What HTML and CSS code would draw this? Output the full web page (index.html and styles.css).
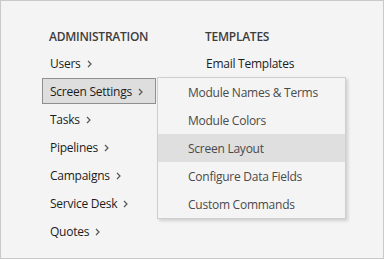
FILE: index.html
```html
<!DOCTYPE html>
<html lang="en">
<head>
  <meta charset="UTF-8" />
  <title>Settings Menu</title>
  <link rel="stylesheet" href="styles.css">
</head>
<body>
  <!-- ======= SETTINGS PANEL ======= -->
  <div class="panel">
    <div class="column admin">
      <h2 class="heading">ADMINISTRATION</h2>
      <ul class="menu">
        <li class="item">Users <svg class="chev" viewBox="0 0 5 8"><path d="M1 1l3 3-3 3"/></svg></li>
        <li class="item active">Screen Settings <svg class="chev" viewBox="0 0 5 8"><path d="M1 1l3 3-3 3"/></svg>
          <ul class="submenu">
            <li>Module Names &amp; Terms</li>
            <li>Module Colors</li>
            <li class="hover">Screen Layout</li>
            <li>Configure Data Fields</li>
            <li>Custom Commands</li>
          </ul>
        </li>
        <li class="item">Tasks <svg class="chev" viewBox="0 0 5 8"><path d="M1 1l3 3-3 3"/></svg></li>
        <li class="item">Pipelines <svg class="chev" viewBox="0 0 5 8"><path d="M1 1l3 3-3 3"/></svg></li>
        <li class="item">Campaigns <svg class="chev" viewBox="0 0 5 8"><path d="M1 1l3 3-3 3"/></svg></li>
        <li class="item">Service Desk <svg class="chev" viewBox="0 0 5 8"><path d="M1 1l3 3-3 3"/></svg></li>
        <li class="item">Quotes <svg class="chev" viewBox="0 0 5 8"><path d="M1 1l3 3-3 3"/></svg></li>
      </ul>
    </div>
    <div class="column templates">
      <h2 class="heading">TEMPLATES</h2>
      <ul class="menu">
        <li class="item">Email Templates</li>
      </ul>
    </div>
  </div>
</body>
</html>
```

FILE: styles.css
```css
/* ======= RESET ======= */
*,*::before,*::after{box-sizing:border-box;margin:0;padding:0}

body{
  font-family:"Open Sans","Noto Sans",sans-serif;
  font-size:12px;
  letter-spacing:-.25px;
  background:#fff;
}

/* ======= PANEL ======= */
.panel{
  width:384px;
  height:259px;
  background:#f4f4f4;
  border:1px solid #c9c9c9;
  display:flex;
  padding:22px 0 0 41px;
}
.column{display:flex;flex-direction:column}
.admin{width:156px}

.heading{
  font-size:12px;
  font-weight:600;
  color:#3d3d3d;
  height:26px;
  line-height:26px;
  padding:1px 0 0 7px;
  margin-bottom:1px;
}

/* ======= MENU ======= */
.menu{list-style:none;display:flex;flex-direction:column;gap:2px}
.item{
  position:relative;
  height:26px;
  line-height:22px;
  padding:2px 7px 0;
  color:#1c1c1c;
  border:1px solid transparent;
  display:flex;
  align-items:center;
  gap:6px;
  white-space:nowrap;
  align-self:flex-start;
}
.item.active{background:#dedede;border-color:#8f8f8f;padding-right:12px}
.chev{width:5px;height:8px;fill:none;stroke:#555;stroke-width:1.2}

/* ======= SUBMENU ======= */
.submenu{
  position:absolute;
  top:-2px;
  left:114px;
  width:189px;
  list-style:none;
  background:#f4f4f4;
  border:1px solid #cfcfcf;
  box-shadow:2px 2px 3px rgba(0,0,0,.15);
  z-index:2;
}
.submenu li{
  height:28px;
  line-height:27px;
  padding:1px 0 0 30px;
  color:#4a4a4a;
}
.submenu li.hover{background:#dfdfdf}
```
